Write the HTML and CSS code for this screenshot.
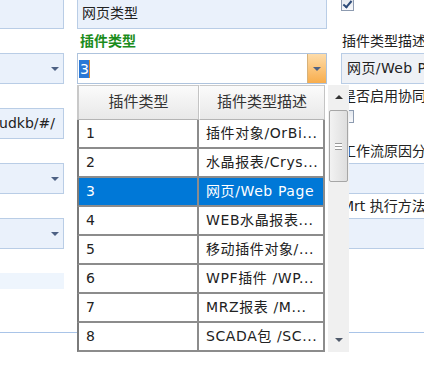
FILE: index.html
```html
<!DOCTYPE html>
<html lang="zh-CN">
<head>
<meta charset="UTF-8">
<meta name="viewport" content="width=device-width, initial-scale=1.0">
<title>插件类型</title>
<link rel="stylesheet" href="styles.css">
</head>
<body>
<div class="form">
    <div class="col col-left">
        <div class="field field-top"></div>
        <div class="label"></div>
        <div class="field combo"><span class="arrow"></span></div>
        <div class="label"></div>
        <div class="field field-text">udkb/#/</div>
        <div class="label"></div>
        <div class="field combo"><span class="arrow"></span></div>
        <div class="label"></div>
        <div class="field combo"><span class="arrow"></span></div>
        <div class="label"></div>
        <div class="strip"></div>
    </div>

    <div class="col col-mid">
        <div class="field field-top">网页类型</div>
        <div class="label label-green">插件类型</div>
        <div class="editor">
            <span class="editor-text"><span class="selected">3</span></span>
            <span class="drop-btn"><span class="arrow"></span></span>
        </div>

        <div class="popup">
            <div class="grid">
                <div class="head">插件类型</div>
                <div class="head">插件类型描述</div>

                <div class="cell">1</div>
                <div class="cell">插件对象/OrBi...</div>
                <div class="cell">2</div>
                <div class="cell">水晶报表/Crys...</div>
                <div class="cell active">3</div>
                <div class="cell active">网页/Web Page</div>
                <div class="cell">4</div>
                <div class="cell">WEB水晶报表...</div>
                <div class="cell">5</div>
                <div class="cell">移动插件对象/...</div>
                <div class="cell">6</div>
                <div class="cell">WPF插件 /WP...</div>
                <div class="cell">7</div>
                <div class="cell">MRZ报表 /M...</div>
                <div class="cell">8</div>
                <div class="cell">SCADA包 /SC...</div>
            </div>
            <div class="scrollbar">
                <span class="scroll-up"></span>
                <span class="thumb"><span class="grip"></span></span>
                <span class="scroll-down"></span>
            </div>
        </div>
    </div>

    <div class="col col-right">
        <div class="check-slot field-top"><span class="checkbox checked"></span></div>
        <div class="label">插件类型描述</div>
        <div class="field field-grey">网页/Web Page</div>
        <div class="label">是否启用协同</div>
        <div class="check-slot"><span class="checkbox"></span></div>
        <div class="label">工作流原因分析</div>
        <div class="field"></div>
        <div class="label">Mrt 执行方法</div>
        <div class="field"></div>
    </div>
</div>
<div class="separator"></div>
</body>
</html>
```

FILE: styles.css
```css
body {
    margin: 0;
    min-height: 384px;
    font-family: "DejaVu Sans", "Noto Sans CJK SC", sans-serif;
    font-size: 14px;
    color: #222;
    background-color: #fff;
}

.form {
    display: flex;
    gap: 13px;
    margin-top: -3px;
    margin-left: -10px;
}

.col {
    display: flex;
    flex-direction: column;
    flex: none;
}

.col-left {
    width: 74px;
}

.col-mid {
    width: 250px;
    position: relative;
    z-index: 1;
}

.col-right {
    width: 83px;
    margin-left: 1px;
    overflow: hidden;
}

.field {
    box-sizing: border-box;
    height: 31px;
    border: 1px solid #b9cde6;
    background-color: #eaf1fb;
    padding: 0 4px;
    line-height: 29px;
    white-space: nowrap;
    overflow: hidden;
}

.col-right .field {
    width: 100px;
}

.field-top {
    height: 32px;
}

.col-mid .field-top {
    padding-top: 1px;
}

.field-grey {
    background-color: #eef1f6;
    padding-left: 5px;
    letter-spacing: 0.4px;
}

.combo {
    display: flex;
    justify-content: flex-end;
    align-items: center;
    padding-right: 4px;
}

.field-text {
    display: flex;
    justify-content: flex-end;
    padding-right: 8px;
}

.arrow {
    width: 0;
    height: 0;
    border-left: 4px solid transparent;
    border-right: 4px solid transparent;
    border-top: 4px solid #4d6184;
}

.strip {
    height: 16px;
    background-color: #eef5fd;
}

.label {
    height: 24px;
    line-height: 24px;
    padding-left: 1px;
    white-space: nowrap;
}

.label-green {
    color: #1b8c1b;
    font-weight: bold;
    padding-left: 3px;
}

.editor {
    box-sizing: border-box;
    height: 31px;
    border: 1px solid #aec3dd;
    background-color: #fff;
    display: flex;
    align-items: stretch;
}

.editor-text {
    flex: 1;
    display: flex;
    align-items: center;
    padding-left: 1px;
}

.selected {
    background-color: #2a78d6;
    color: #fff;
    line-height: 18px;
    padding: 0 0 0 1px;
    border-right: 1px solid #e0892a;
}

.drop-btn {
    width: 18px;
    border-left: 1px solid #d7b27a;
    background: linear-gradient(#fddcaa, #f8ad4c);
    display: flex;
    justify-content: center;
    align-items: center;
}

.popup {
    position: absolute;
    top: 88px;
    left: 0;
    width: 272px;
    height: 267px;
    display: flex;
    background-color: #fff;
}

.grid {
    width: 250px;
    box-sizing: border-box;
    display: grid;
    grid-template-columns: 122px 126px;
    grid-template-rows: 35px repeat(8, 29px);
    align-content: start;
}

.head {
    box-sizing: border-box;
    background: linear-gradient(#fbfbfb, #e8e8e8);
    border-top: 1px solid #c9c9c9;
    border-right: 1px solid #c4c4c4;
    border-bottom: 1px solid #b4b4b4;
    border-left: 1px solid #fff;
    font-size: 15px;
    color: #333;
    text-align: center;
    line-height: 33px;
}

.head:first-child {
    border-left: 2px solid #c9c9c9;
}

.cell {
    box-sizing: border-box;
    border-right: 2px solid #8c8c8c;
    border-bottom: 2px solid #8c8c8c;
    padding-left: 7px;
    line-height: 27px;
    letter-spacing: 0.6px;
    white-space: nowrap;
    overflow: hidden;
}

.cell:nth-child(odd) {
    border-left: 2px solid #7a7a7a;
}

.cell.active {
    background-color: #0078d7;
    color: #fff;
}

.scrollbar {
    width: 21px;
    margin-left: 1px;
    background-color: #f0f0f0;
    display: flex;
    flex-direction: column;
    align-items: center;
}

.scroll-up,
.scroll-down {
    width: 0;
    height: 0;
    border-left: 4px solid transparent;
    border-right: 4px solid transparent;
}

.scroll-up {
    margin-top: 10px;
    border-bottom: 4px solid #333;
}

.scroll-down {
    margin-top: auto;
    margin-bottom: 10px;
    border-top: 4px solid #505a6a;
}

.thumb {
    box-sizing: border-box;
    width: 19px;
    height: 72px;
    margin-top: 11px;
    border: 1px solid #a6a6a6;
    border-radius: 2px;
    background: linear-gradient(90deg, #f2f2f2, #dedede);
    display: flex;
    justify-content: center;
    align-items: center;
}

.grip {
    width: 7px;
    height: 5px;
    border-top: 1px solid #9a9a9a;
    border-bottom: 1px solid #9a9a9a;
    background: linear-gradient(#fff 0 2px, #9a9a9a 2px 3px, #fff 3px);
}

.check-slot {
    height: 31px;
    padding-top: 2px;
    box-sizing: border-box;
}

.check-slot.field-top {
    height: 32px;
    padding-top: 1px;
}

.checkbox {
    display: block;
    box-sizing: border-box;
    width: 13px;
    height: 13px;
    border: 1px solid #8d9bb0;
    background: linear-gradient(#e4e8ee, #f8f9fb);
    position: relative;
}

.checkbox.checked::after {
    content: "";
    position: absolute;
    left: 3px;
    top: 0;
    width: 3px;
    height: 7px;
    border-right: 2px solid #2c4a78;
    border-bottom: 2px solid #2c4a78;
    transform: rotate(40deg);
}

.separator {
    height: 1px;
    margin-top: 43px;
    background-color: #a9c4e8;
}
```
